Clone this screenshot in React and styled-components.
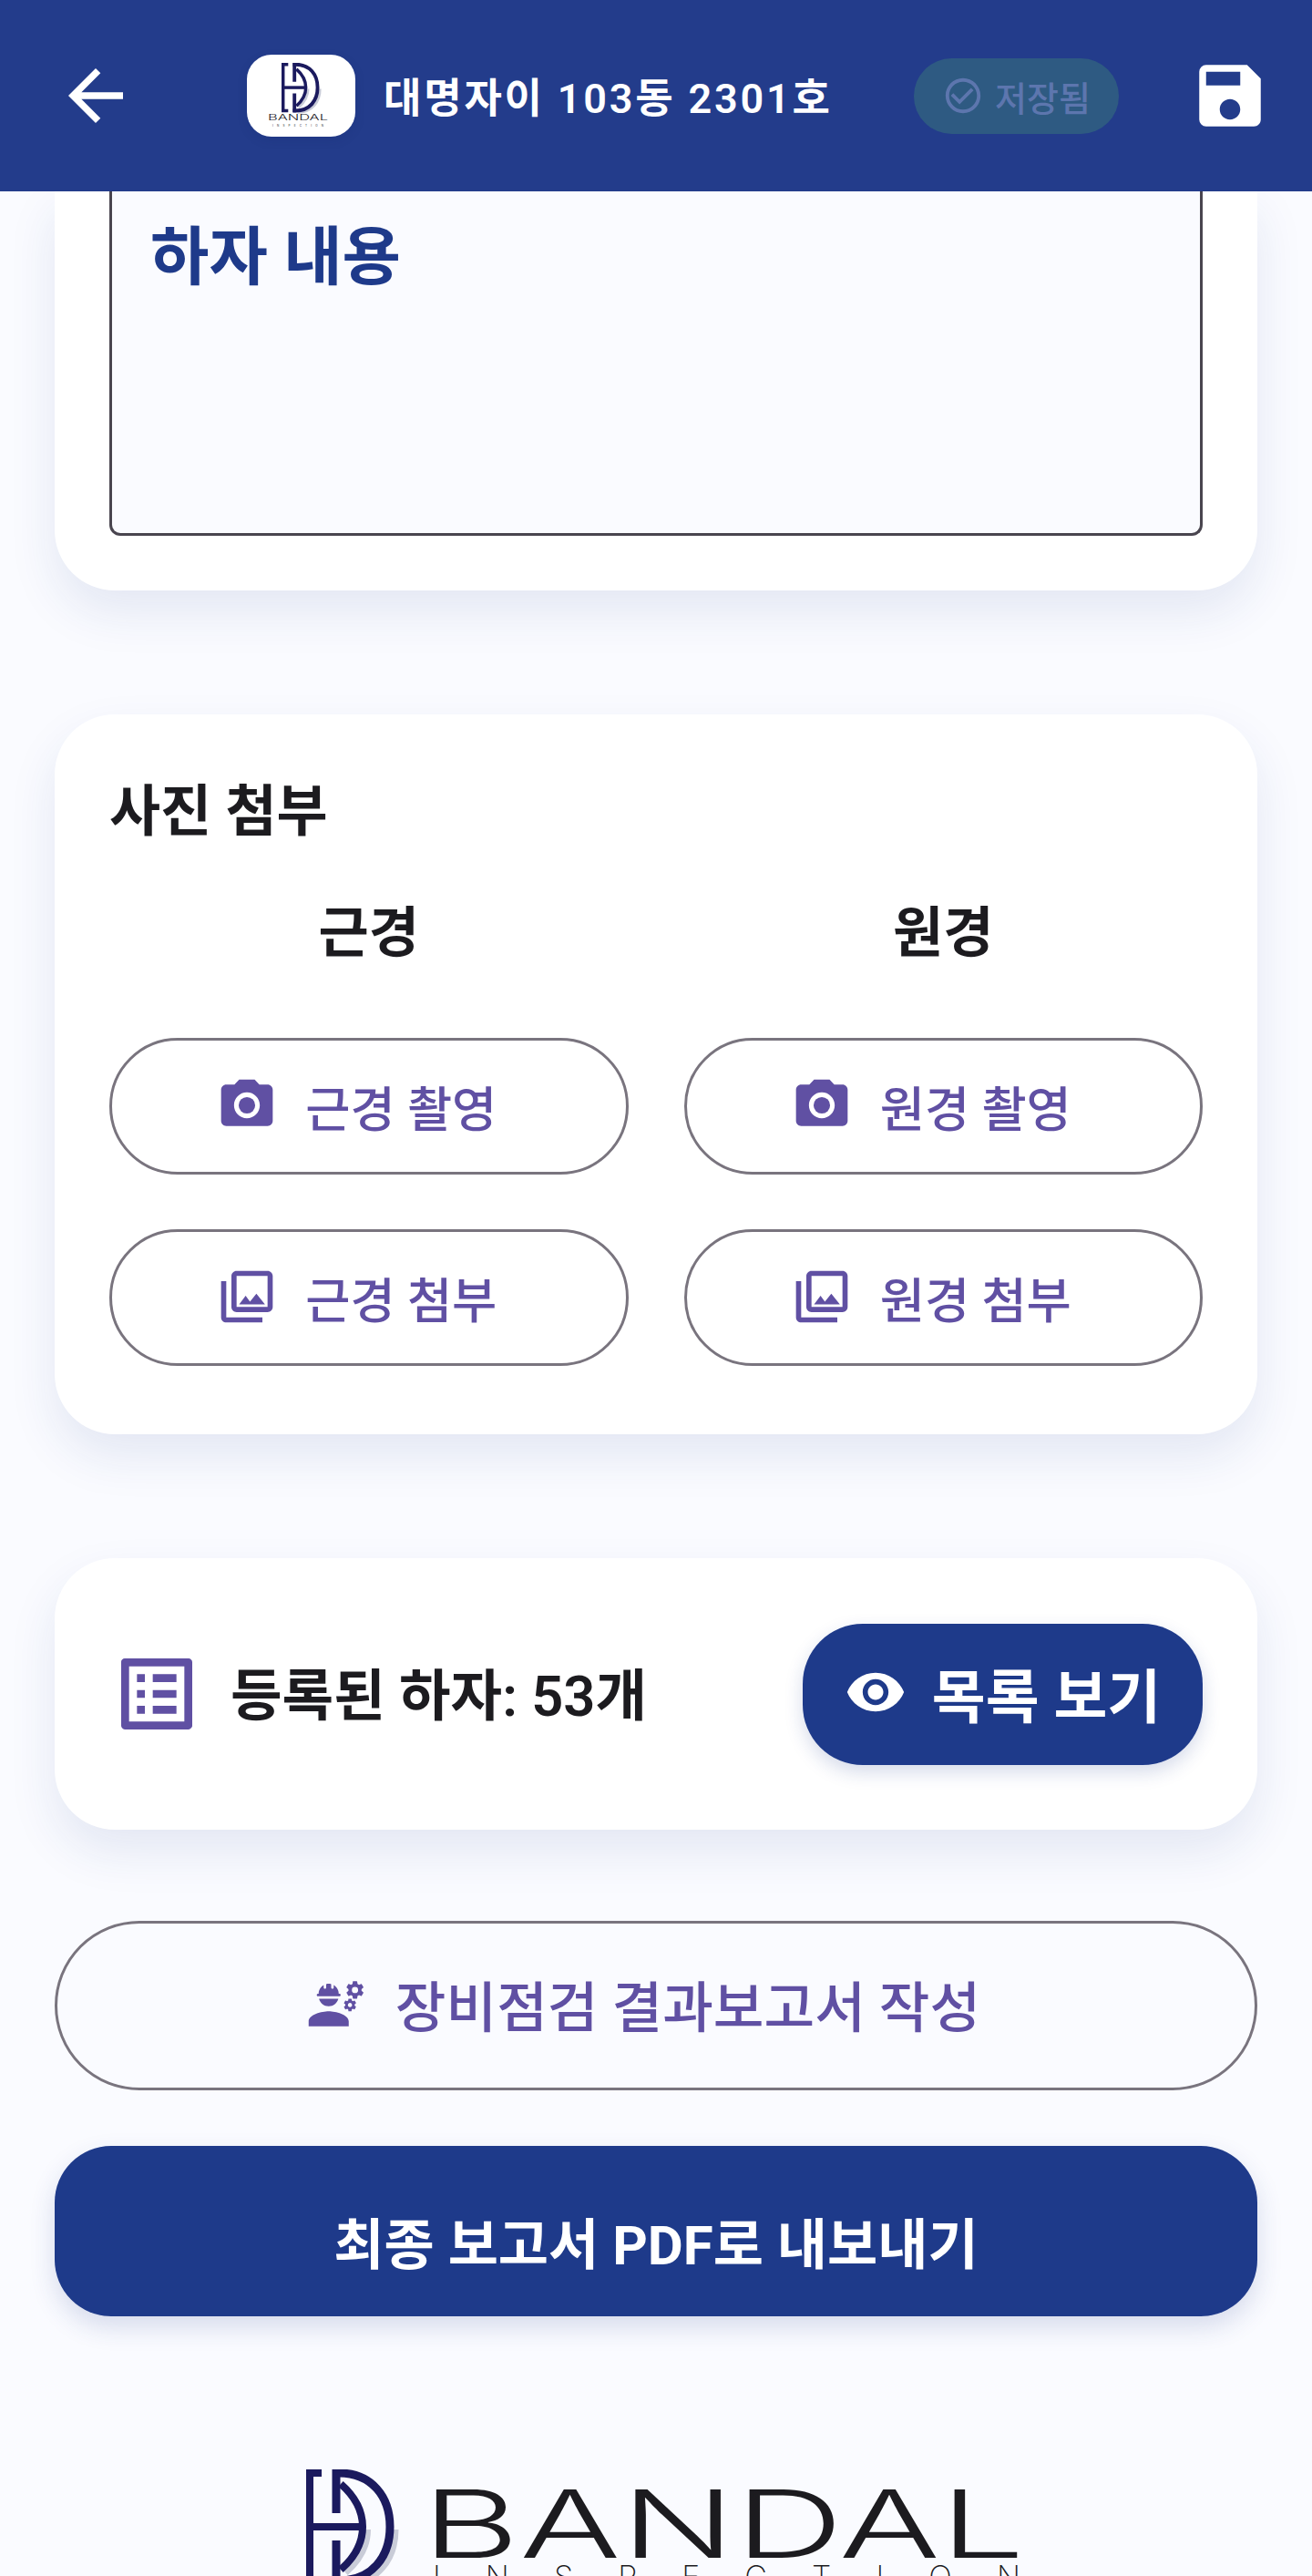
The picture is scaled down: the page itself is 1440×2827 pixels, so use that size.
import React from "react";
import styled, { createGlobalStyle } from "styled-components";
import {
  MdArrowBack,
  MdSave,
  MdCheckCircleOutline,
  MdPhotoCamera,
  MdOutlinePhotoLibrary,
  MdOutlineListAlt,
  MdVisibility,
  MdEngineering,
} from "react-icons/md";

const NAVY = "#1e3a8a";
const PURPLE = "#6050a3";
const OUTLINE = "#79747e";
const INK = "#1c1b1f";

const GlobalStyle = createGlobalStyle`
  html, body {
    margin: 0;
    padding: 0;
    background: #fafbff;
  }
  * {
    box-sizing: border-box;
  }
  body {
    font-family: Roboto, "Noto Sans CJK KR", sans-serif;
  }
`;

const Page = styled.div`
  width: 1440px;
  height: 2827px;
  overflow: hidden;
  background: #fafbff;
  display: flex;
  flex-direction: column;
`;

const Header = styled.header`
  height: 210px;
  flex: none;
  background: #233c8b;
  display: flex;
  align-items: center;
  position: relative;
  z-index: 2;
  padding: 0 45px 0 60px;
  color: #fff;
`;

const BackButton = styled.div`
  width: 90px;
  height: 90px;
  display: flex;
  margin-right: 121px;
`;

const LogoTile = styled.div`
  width: 119px;
  height: 90px;
  flex: none;
  background: #fff;
  border-radius: 27px;
  box-shadow: 0 4px 12px rgba(20, 30, 90, 0.12);
  display: flex;
  align-items: center;
  justify-content: center;
`;

const ProjectTitle = styled.h1`
  margin: -2px 0 0 31px;
  width: 582px;
  flex: none;
  font-size: 45px;
  font-weight: 600;
  letter-spacing: 2.8px;
  white-space: nowrap;
`;

const SavedBadge = styled.div`
  width: 225px;
  height: 83px;
  flex: none;
  border-radius: 42px;
  background: #2e5a82;
  color: #5d76ae;
  display: flex;
  align-items: center;
  justify-content: center;
  gap: 12px;
  font-size: 38px;
  font-weight: 500;
`;

const SaveButton = styled.div`
  width: 90px;
  height: 90px;
  display: flex;
  margin-left: auto;
`;

const Content = styled.main`
  padding: 0 60px;
  display: flex;
  flex-direction: column;
`;

const Card = styled.section`
  background: #fff;
  border-radius: ${(p) => p.$radius || "66px"};
  box-shadow: 0 24px 52px rgba(30, 58, 138, 0.1);
  margin-bottom: ${(p) => p.$gap || "136px"};
`;

const NoteCard = styled(Card)`
  height: 438px;
  padding: 0 60px 60px;
`;

const NoteBox = styled.div`
  height: 378px;
  background: #fafbff;
  border: 3px solid #49454f;
  border-top: 0;
  border-radius: 0 0 12px 12px;
  padding: 25px 42px;
  color: ${NAVY};
  font-size: 70px;
  font-weight: 600;
  line-height: 96px;
`;

const PhotoCard = styled(Card)`
  height: 790px;
  padding: 65px 60px 0;
`;

const CardTitle = styled.h2`
  margin: 0;
  color: ${INK};
  font-size: 61px;
  font-weight: 700;
  line-height: 84px;
`;

const PhotoGrid = styled.div`
  display: grid;
  grid-template-columns: 1fr 1fr;
  column-gap: 61px;
  row-gap: 60px;
  margin-top: 46px;
`;

const ColumnTitle = styled.div`
  height: 92px;
  margin-bottom: 8px;
  text-align: center;
  color: ${INK};
  font-size: 60px;
  font-weight: 600;
  line-height: 92px;
`;

const OutlineButton = styled.button`
  height: ${(p) => p.$height || "150px"};
  width: 100%;
  padding: 0 ${(p) => p.$shift || "27px"} ${(p) => p.$lift || "2px"} 0;
  margin-bottom: ${(p) => p.$gap || "0"};
  background: transparent;
  border: 3px solid ${OUTLINE};
  border-radius: 93px;
  color: ${PURPLE};
  font-family: inherit;
  font-size: ${(p) => p.$size || "53.5px"};
  font-weight: 500;
  display: flex;
  align-items: center;
  justify-content: center;
  gap: ${(p) => p.$iconGap || "30px"};
`;

const CountCard = styled(Card)`
  height: 298px;
  padding: 0 60px;
  display: flex;
  align-items: center;
`;

const CountIcon = styled.div`
  width: 104px;
  height: 104px;
  display: flex;
  margin-right: 29px;
  color: ${PURPLE};
`;

const CountLabel = styled.div`
  color: ${INK};
  font-size: 61.5px;
  font-weight: 600;
  white-space: nowrap;
  padding-bottom: 6px;
`;

const ListButton = styled.button`
  margin-left: auto;
  width: 439px;
  height: 155px;
  border: 0;
  padding: 0 0 4px;
  border-radius: 66px;
  background: ${NAVY};
  color: #fff;
  font-family: inherit;
  font-size: 64px;
  font-weight: 600;
  box-shadow: 0 8px 20px rgba(30, 58, 138, 0.18);
  display: flex;
  align-items: center;
  justify-content: center;
  gap: 28px;
`;

const ExportButton = styled.button`
  height: 187px;
  width: 100%;
  border: 0;
  padding: 20px 0 0;
  border-radius: 62px;
  background: ${NAVY};
  color: #fff;
  font-family: inherit;
  font-size: 60px;
  font-weight: 700;
  box-shadow: 0 12px 28px rgba(30, 58, 138, 0.16);
`;

const Footer = styled.footer`
  margin-top: 168px;
  display: flex;
  justify-content: center;
`;

const LogoMark = ({ x = 0, y = 0, scale = 1 }) => (
  <g transform={`translate(${x} ${y}) scale(${scale})`} fill="none" strokeLinecap="butt">
    <g stroke="#c9ccd8" transform="translate(5 3)">
      <path d="M92 63C92 96 72 122 36 122" strokeWidth="9" />
      <path d="M62 63C62 80 54 96 38 110" strokeWidth="8" />
    </g>
    <g stroke="#1b1a5e">
      <path d="M17 4H4V122H17" strokeWidth="8" />
      <path d="M4 63H62" strokeWidth="8" />
      <path d="M33 0V48M33 78V126" strokeWidth="9" />
      <path d="M29 4H36C72 4 92 30 92 63C92 96 72 122 36 122H29" strokeWidth="9" />
      <path d="M38 16C54 30 62 46 62 63C62 80 54 96 38 110" strokeWidth="8" />
    </g>
  </g>
);

const TileLogo = () => (
  <svg width="80" height="72" viewBox="0 0 80 72">
    <LogoMark x={18} y={0} scale={0.43} />
    <text x="3" y="63" fontFamily="Inter, sans-serif" fontSize="9" fontWeight="300" fill={INK} textLength="66" lengthAdjust="spacingAndGlyphs">
      BANDAL
    </text>
    <text x="8" y="70" fontFamily="Inter, sans-serif" fontSize="3" fill={INK} textLength="56">
      INSPECTION
    </text>
  </svg>
);

const FooterLogo = () => (
  <svg width="800" height="130" viewBox="0 0 800 130">
    <LogoMark x={16} y={0} />
    <text x="143" y="97" fontFamily="Inter, sans-serif" fontSize="103" fontWeight="300" fill={INK} textLength="662" lengthAdjust="spacingAndGlyphs">
      BANDAL
    </text>
    <text x="155" y="130" fontFamily="Inter, sans-serif" fontSize="34" fontWeight="200" fill={INK} textLength="645">
      INSPECTION
    </text>
  </svg>
);

const photoButtons = [
  { icon: MdPhotoCamera, label: "근경 촬영" },
  { icon: MdPhotoCamera, label: "원경 촬영" },
  { icon: MdOutlinePhotoLibrary, label: "근경 첨부" },
  { icon: MdOutlinePhotoLibrary, label: "원경 첨부" },
];

export default function App() {
  return (
    <Page>
      <GlobalStyle />
      <Header>
        <BackButton>
          <MdArrowBack size={90} />
        </BackButton>
        <LogoTile>
          <TileLogo />
        </LogoTile>
        <ProjectTitle>대명자이 103동 2301호</ProjectTitle>
        <SavedBadge>
          <MdCheckCircleOutline size={46} />
          저장됨
        </SavedBadge>
        <SaveButton>
          <MdSave size={90} />
        </SaveButton>
      </Header>
      <Content>
        <NoteCard $radius="0 0 66px 66px">
          <NoteBox>하자 내용</NoteBox>
        </NoteCard>

        <PhotoCard>
          <CardTitle>사진 첨부</CardTitle>
          <PhotoGrid>
            <ColumnTitle>근경</ColumnTitle>
            <ColumnTitle>원경</ColumnTitle>
            {photoButtons.map(({ icon: Icon, label }) => (
              <OutlineButton key={label}>
                <Icon size={68} />
                {label}
              </OutlineButton>
            ))}
          </PhotoGrid>
        </PhotoCard>

        <CountCard $gap="100px">
          <CountIcon>
            <MdOutlineListAlt size={104} />
          </CountIcon>
          <CountLabel>등록된 하자: 53개</CountLabel>
          <ListButton>
            <MdVisibility size={68} />
            목록 보기
          </ListButton>
        </CountCard>

        <OutlineButton $height="186px" $size="60.5px" $iconGap="32px" $shift="28px" $lift="5px" $gap="61px">
          <MdEngineering size={66} />
          장비점검 결과보고서 작성
        </OutlineButton>

        <ExportButton>최종 보고서 PDF로 내보내기</ExportButton>

        <Footer>
          <FooterLogo />
        </Footer>
      </Content>
    </Page>
  );
}
